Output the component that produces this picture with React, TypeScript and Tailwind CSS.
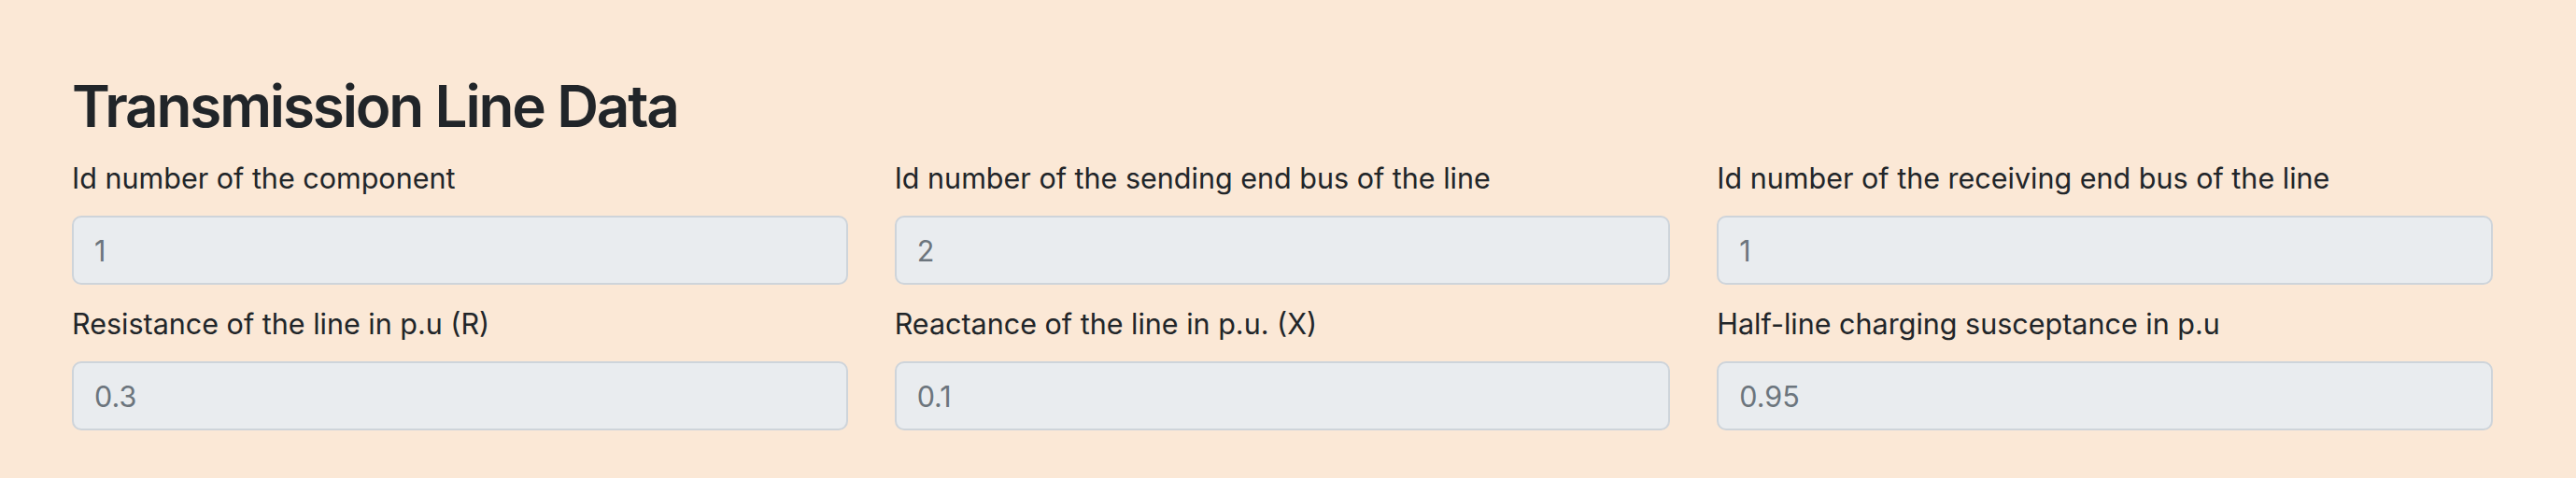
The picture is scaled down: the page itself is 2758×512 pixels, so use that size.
const fields = [
  { label: 'Id number of the component', value: '1' },
  { label: 'Id number of the sending end bus of the line', value: '2' },
  { label: 'Id number of the receiving end bus of the line', value: '1' },
  { label: 'Resistance of the line in p.u (R)', value: '0.3' },
  { label: 'Reactance of the line in p.u. (X)', value: '0.1' },
  { label: 'Half-line charging susceptance in p.u', value: '0.95' },
]

export default function App() {
  return (
    <div className="min-h-[512px] w-full bg-[#fbe8d6] pl-[77px] pr-[89px] pt-[77px] font-['Inter',sans-serif] text-[#212529]">
      <h1 className="text-[62px] font-semibold leading-[1.2] tracking-[-0.035em] mb-[17px]">Transmission Line Data</h1>
      <div className="grid grid-cols-3 gap-x-[50px] gap-y-[19px]">
        {fields.map((f, i) => (
          <div key={i} className="flex flex-col">
            <label className="text-[30.5px] leading-[45px] mb-[18px]">{f.label}</label>
            <input
              disabled
              value={f.value}
              readOnly
              className="h-[74px] w-full rounded-[10px] border-2 border-[#ced4da] bg-[#e9ecef] px-[22px] text-[30.5px] text-[#6c757d] outline-none"
            />
          </div>
        ))}
      </div>
    </div>
  )
}
